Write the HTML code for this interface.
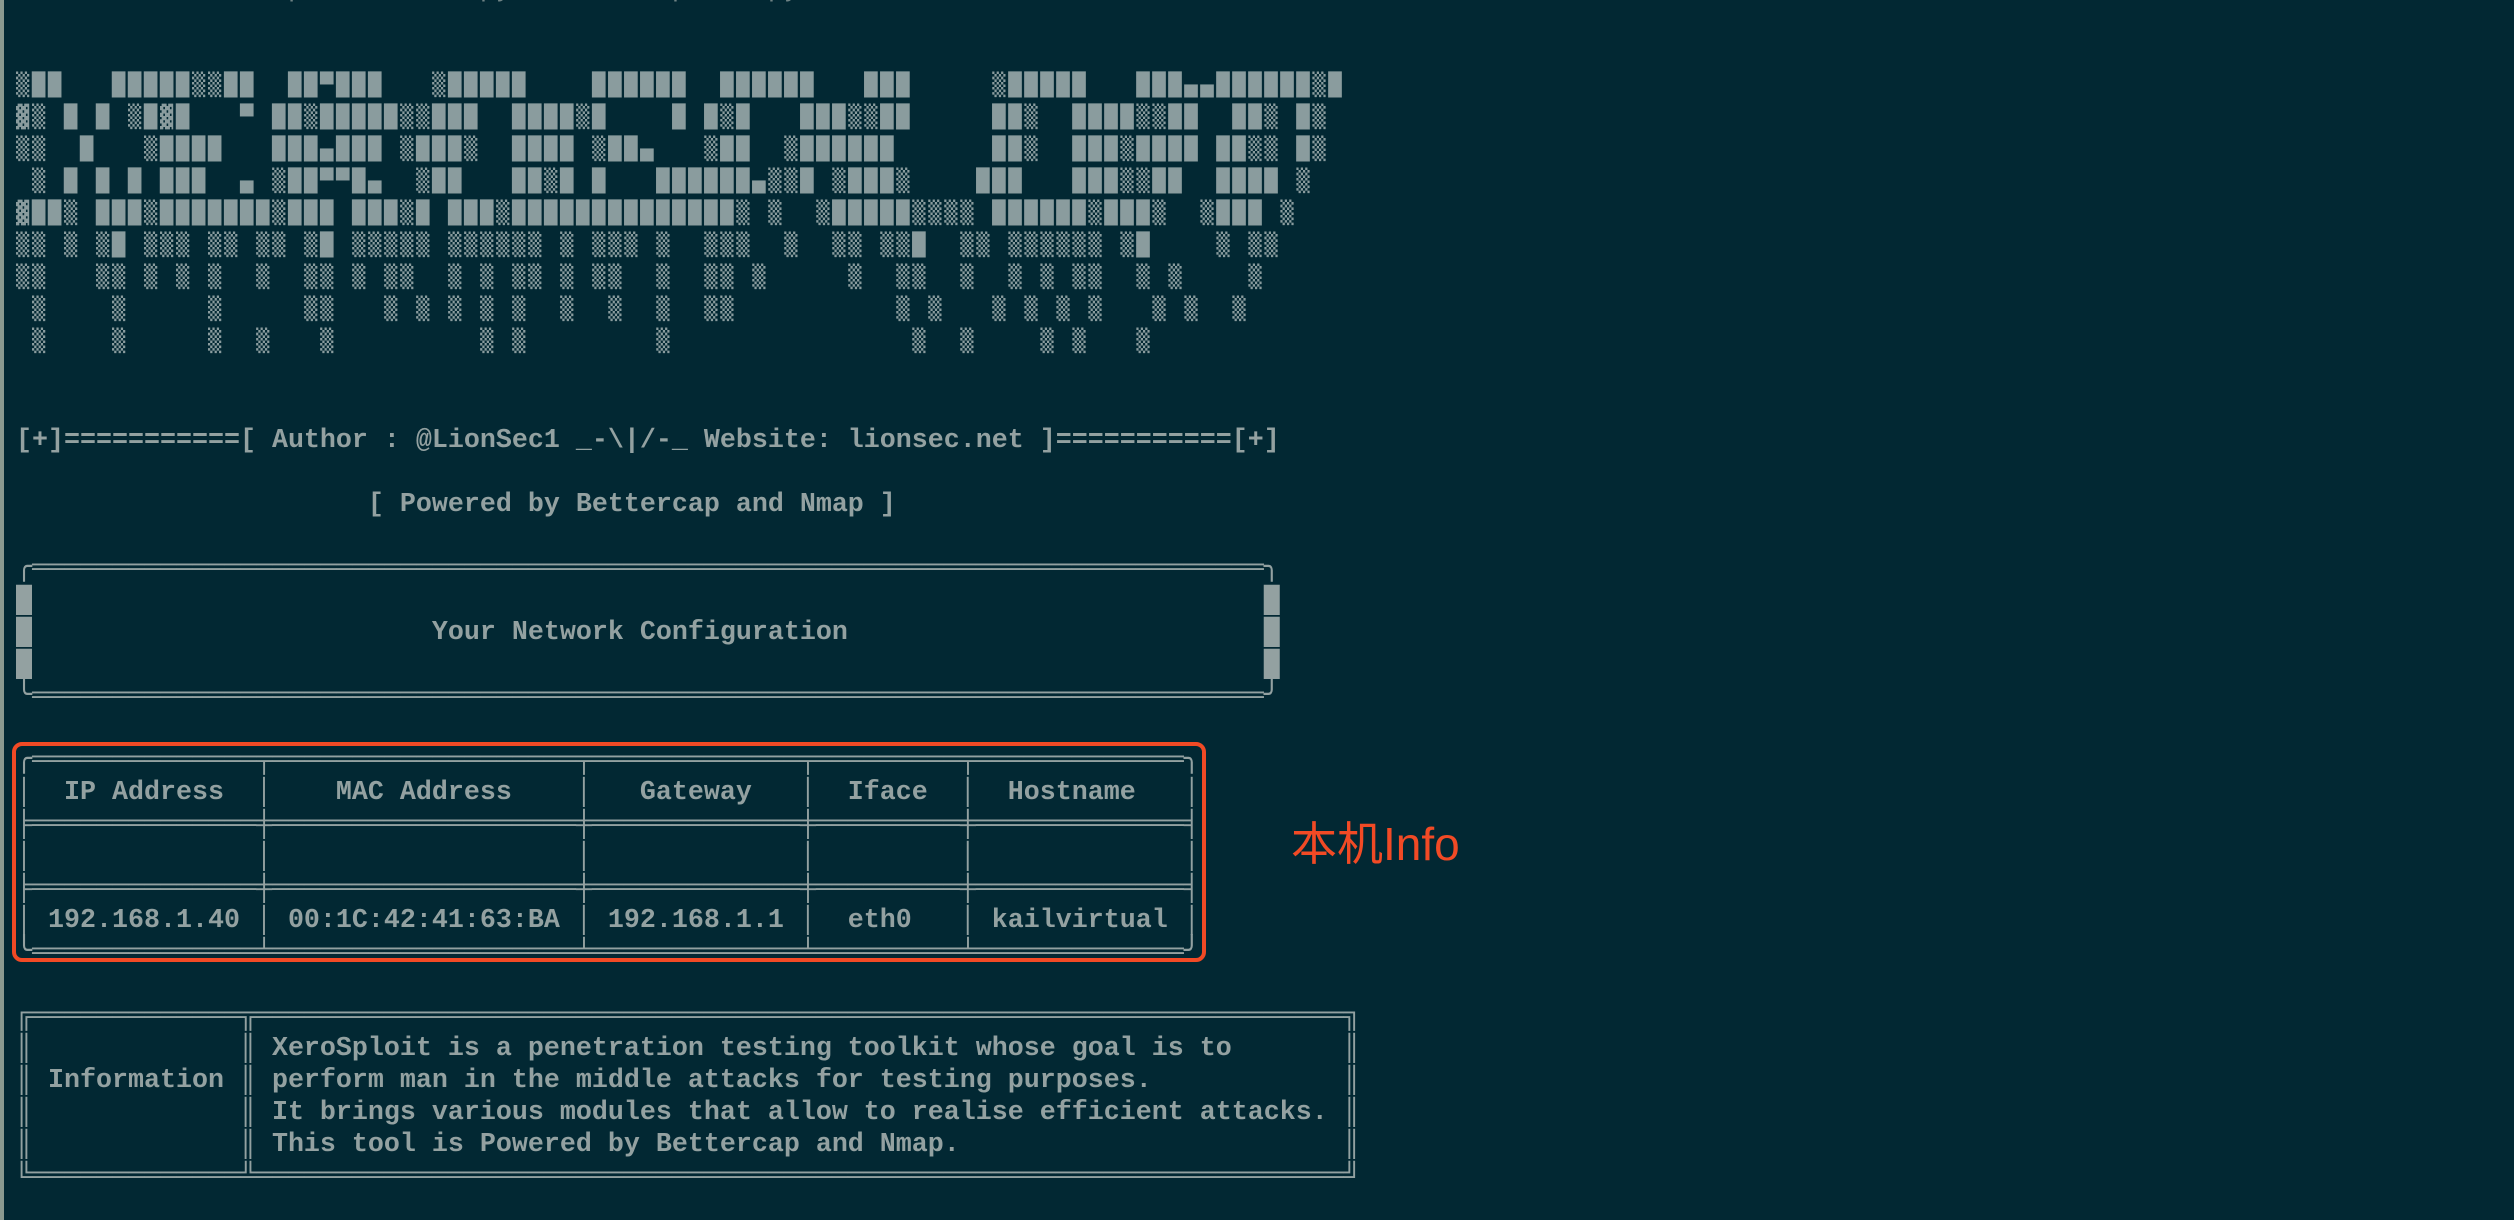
<!DOCTYPE html>
<html><head><meta charset="utf-8"><style>
html,body{margin:0;padding:0;background:#022833;width:2514px;height:1220px;overflow:hidden;position:relative}
.edge{position:absolute;left:0;top:0;width:4px;height:1220px;background:#8a9a90}
pre{position:absolute;margin:0;left:16px;font-family:"Liberation Mono","DejaVu Sans Mono",monospace;font-size:26.67px;line-height:32px;color:#93a1a1;font-weight:bold;white-space:pre}
pre.art{top:70px;font-weight:normal;color:#8a9c9e;font-family:"DejaVu Sans Mono","Liberation Mono",monospace;font-size:22px;letter-spacing:2.76px;line-height:32px}
.red{position:absolute;left:12px;top:742px;width:1186px;height:212px;border:4px solid #f24a25;border-radius:10px}
.lbl{position:absolute;left:1291px;top:814px;font-family:"Liberation Sans","Noto Sans CJK SC",sans-serif;font-size:46px;color:#f24a25;line-height:60px}
</style></head><body>
<div class="edge"></div>
<pre style="top:-26px;color:#6f8385;font-weight:normal">root@kali:~/xerosploit# sudo python xerosploit.py</pre>
<pre class="art">▒██   █████▒▒██  ██▀███   ▒█████    ██████  ██████   ███     ▒█████   ███▄▄██████▒█
▓▒ █ █ ▒█▓█   ▀ ██▒█████▒▒███  ████▒█    █ █▒█   ███▒▒██     ██▒  ████▒▒██  ██▒ █▒
▒▒  █   ▒████   ███▄███ ▒███▒  ████ ▒██▄   ▒██  ▒██████      ██▒  ███▒████ ██▒▒ █▒
 ▒ █ █ █ ███  ▄ ▒██▀▀█▄  ▒██   ██▒█ █   ██████▄▒▒█ ▒███▒    ███   ███▒▒██  ████ ▒
▓██▒ ███▒███████▒███ ███▒█ ███▒██████████████▒ ▒  ▒█████▒▒▒▒ ██████▒███▒  ▒███ ▒
▒▒ ▒ ▒█ ▒▒▒ ▒▒ ▒▒ ▒█ ▒▒▒▒▒ ▒▒▒▒▒▒ ▒ ▒▒▒ ▒  ▒▒▒  ▒  ▒▒ ▒▒█  ▒▒ ▒▒▒▒▒▒ ▒█    ▒ ▒▒
▒▒   ▒▒ ▒ ▒ ▒  ▒  ▒▒ ▒ ▒▒  ▒ ▒ ▒▒ ▒ ▒▒  ▒  ▒▒ ▒     ▒  ▒▒  ▒  ▒ ▒ ▒▒  ▒ ▒    ▒
 ▒    ▒     ▒     ▒▒   ▒ ▒ ▒ ▒ ▒  ▒  ▒  ▒  ▒▒          ▒ ▒   ▒ ▒ ▒ ▒   ▒ ▒  ▒
 ▒    ▒     ▒  ▒   ▒         ▒ ▒        ▒               ▒  ▒    ▒ ▒   ▒</pre>
<pre style="top:425px">[+]===========[ Author : @LionSec1 _-\|/-_ Website: lionsec.net ]===========[+]

                      [ Powered by Bettercap and Nmap ]

╭═════════════════════════════════════════════════════════════════════════════╮
█                                                                             █
█                         Your Network Configuration                          █
█                                                                             █
╰═════════════════════════════════════════════════════════════════════════════╯

╭══════════════╤═══════════════════╤═════════════╤═════════╤═════════════╮
│  IP Address  │    MAC Address    │   Gateway   │  Iface  │  Hostname   │
╞══════════════╪═══════════════════╪═════════════╪═════════╪═════════════╡
│              │                   │             │         │             │
╞══════════════╪═══════════════════╪═════════════╪═════════╪═════════════╡
│ 192.168.1.40 │ 00:1C:42:41:63:BA │ 192.168.1.1 │  eth0   │ kailvirtual │
╰══════════════╧═══════════════════╧═════════════╧═════════╧═════════════╯

╔═════════════╦════════════════════════════════════════════════════════════════════╗
║             ║ XeroSploit is a penetration testing toolkit whose goal is to       ║
║ Information ║ perform man in the middle attacks for testing purposes.            ║
║             ║ It brings various modules that allow to realise efficient attacks. ║
║             ║ This tool is Powered by Bettercap and Nmap.                        ║
╚═════════════╩════════════════════════════════════════════════════════════════════╝</pre>
<div class="red"></div>
<div class="lbl">本机Info</div>
</body></html>
